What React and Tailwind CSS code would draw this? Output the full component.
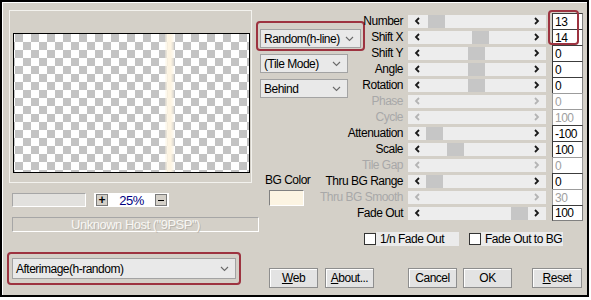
import React from "react"

const rows = [
  { label: "Number", thumb: 20, value: "13" },
  { label: "Shift X", thumb: 64, value: "14" },
  { label: "Shift Y", thumb: 60, value: "0" },
  { label: "Angle", thumb: 60, value: "0" },
  { label: "Rotation", thumb: 60, value: "0" },
  { label: "Phase", off: true, value: "0" },
  { label: "Cycle", off: true, value: "100" },
  { label: "Attenuation", thumb: 18, value: "-100" },
  { label: "Scale", thumb: 39, value: "100" },
  { label: "Tile Gap", off: true, value: "0" },
  { label: "Thru BG Range", thumb: 18, value: "0" },
  { label: "Thru BG Smooth", off: true, value: "30" },
  { label: "Fade Out", thumb: 103, value: "100" },
]

const Chevron = ({ dir = "left", off }) => (
  <svg width="6" height="8" viewBox="0 0 6 8" className="shrink-0">
    <polyline
      points={dir === "left" ? "5,1 2,4 5,7" : "1,1 4,4 1,7"}
      fill="none"
      stroke={off ? "#b4b4b4" : "#1a1a1a"}
      strokeWidth="1.8"
    />
  </svg>
)

const Down = () => (
  <svg width="9" height="6" viewBox="0 0 9 6" className="shrink-0">
    <polyline points="1,1 4.5,4.5 8,1" fill="none" stroke="#6a6a6a" strokeWidth="1.1" />
  </svg>
)

const Combo = ({ text, className }) => (
  <div className={`flex items-center justify-between bg-[#e9e9e9] border border-[#a3a3a3] pl-[3px] pr-[6px] whitespace-nowrap ${className}`}>
    <span>{text}</span>
    <Down />
  </div>
)

const Slider = ({ thumb, off }) => (
  <div className="relative ml-[5px] w-[138px] h-[13px] bg-[#ededed] flex items-center justify-between px-[6px]">
    {!off && (
      <div className="absolute top-0 h-[13px] w-[17px] bg-[#c6c6c6]" style={{ left: thumb }} />
    )}
    <Chevron dir="left" off={off} />
    <Chevron dir="right" off={off} />
  </div>
)

const Button = ({ children, className = "" }) => (
  <div className={`h-[20px] flex items-center justify-center bg-[#e3e3e3] border border-[#8e8e8e] shadow-[inset_1px_1px_0_#fff] whitespace-nowrap ${className}`}>
    {children}
  </div>
)

export default function App() {
  return (
    <div className="w-[591px] h-[300px] bg-white font-['Liberation_Sans',Arial,sans-serif] text-[12px] tracking-[-0.5px] leading-none text-black">
      <div className="w-[589px] h-[297px] border-2 border-black bg-[#d4d0c8]">
        <div className="h-full border-l border-t border-white flex flex-col">
          {/* top part */}
          <div className="flex h-[243px]">
            {/* preview column */}
            <div className="ml-[6px] mt-[7px] w-[247px] shrink-0">
              <div className="w-[243px] h-[173px] border border-[#f3f2ee]">
                <div className="relative ml-[3px] mt-[22px] w-[237px] h-[140px] border border-black bg-[repeating-conic-gradient(#c3c3c3_0_25%,#fff_0_50%)] bg-[length:16px_16px] bg-[position:-7px_0px] overflow-hidden">
                  <div className="absolute top-0 bottom-0 left-[151px] w-[9px] bg-[linear-gradient(to_right,rgba(253,245,228,0.35),#fdf4e2_35%,#fdf4e2_65%,rgba(253,245,228,0.35))]" />
                </div>
              </div>
              <div className="flex mt-[10px]">
                <div className="ml-[3px] w-[74px] h-[14px] bg-[#e2e1de] border border-t-[#a6a6a6] border-l-[#a6a6a6] border-b-white border-r-white" />
                <div className="ml-[8px] w-[75px] h-[14px] bg-white flex items-center px-[2px]">
                  <div className="w-[12px] h-[12px] bg-[#d4d0c8] border border-[#7a7a7a] flex items-center justify-center font-bold tracking-normal">+</div>
                  <span className="flex-1 text-center text-[#000080] text-[13px]">25%</span>
                  <div className="w-[12px] h-[12px] bg-[#d4d0c8] border border-[#7a7a7a] flex items-center justify-center">
                    <div className="w-[6px] h-[1px] bg-black" />
                  </div>
                </div>
              </div>
              <div className="mt-[10px] ml-[3px] w-[247px] h-[15px] border border-t-[#a6a6a6] border-l-[#a6a6a6] border-b-white border-r-white flex items-center justify-center text-[13px] text-[#f8f7f4] [text-shadow:1px_1px_0_#b8b4ac] whitespace-nowrap">
                Unknown Host ("9PSP")
              </div>
            </div>

            {/* middle column */}
            <div className="w-[54px] shrink-0 flex flex-col">
              <div className="mt-[18px] w-[109px] h-[30px] border-2 border-[#9d3340] rounded-[4px] pl-[2px] pt-[6px]">
                <Combo text="Random(h-line)" className="w-[101px] h-[19px]" />
              </div>
              <Combo text="(Tile Mode)" className="mt-[3px] ml-[4px] w-[88px] h-[19px]" />
              <Combo text="Behind" className="mt-[6px] ml-[4px] w-[88px] h-[19px]" />
              <div className="mt-[74px] ml-[9px] h-[16px] flex items-center whitespace-nowrap">BG Color</div>
              <div className="mt-[2px] ml-[13px] w-[35px] h-[16px] bg-[#fcf4e2] border border-t-[#808080] border-l-[#808080] border-b-white border-r-white" />
            </div>

            {/* parameter rows */}
            <div className="relative w-[275px] shrink-0">
              <div className="mt-[10px]">
                {rows.map((r, i) => (
                  <div key={r.label} className="flex items-center h-[16px]">
                    <div className={`w-[93px] text-right whitespace-nowrap ${r.off ? "text-[#a8a8a8]" : ""}`}>{r.label}</div>
                    <Slider thumb={r.thumb} off={r.off} />
                    <div
                      className={`ml-[6px] w-[31px] h-[16px] bg-white border-l border-t border-r pl-[2px] flex items-center ${
                        r.off ? "border-[#9c9c9c] text-[#a0a0a0]" : "border-l-[#3c3c3c] border-t-[#3c3c3c] border-r-[#808080]"
                      } ${i === rows.length - 1 ? "border-b border-b-[#808080]" : ""}`}
                    >
                      {r.value}
                    </div>
                  </div>
                ))}
              </div>
              <div className="absolute left-[238px] top-[7px] w-[31px] h-[35px] border-2 border-[#9d3340] rounded-[4px]" />
              <div className="flex items-center mt-[11px] ml-[54px] h-[14px] whitespace-nowrap">
                <div className="w-[12px] h-[12px] bg-white border border-[#333]" />
                <div className="h-[14px] w-[83px] bg-[#ebebeb] flex items-center pl-[4px]">1/n Fade Out</div>
                <div className="ml-[10px] w-[12px] h-[12px] bg-white border border-[#333]" />
                <div className="h-[14px] w-[82px] bg-[#ebebeb] flex items-center pl-[4px]">Fade Out to BG</div>
              </div>
            </div>
          </div>

          {/* bottom part */}
          <div className="flex items-start">
            <div className="ml-[4px] mt-[6px] w-[234px] h-[33px] border-2 border-[#9d3340] rounded-[4px] pl-[3px] pt-[4px]">
              <Combo text="Afterimage(h-random)" className="w-[224px] h-[21px]" />
            </div>
            <div className="flex mt-[22px] ml-[28px]">
              <Button className="w-[49px]"><span className="underline">W</span>eb</Button>
              <Button className="ml-[7px] w-[49px]"><span className="underline">A</span>bout...</Button>
              <Button className="ml-[34px] w-[49px]">Cancel</Button>
              <Button className="ml-[6px] w-[49px]">OK</Button>
              <Button className="ml-[20px] w-[50px]"><span className="underline">R</span>eset</Button>
            </div>
          </div>
        </div>
      </div>
    </div>
  )
}
